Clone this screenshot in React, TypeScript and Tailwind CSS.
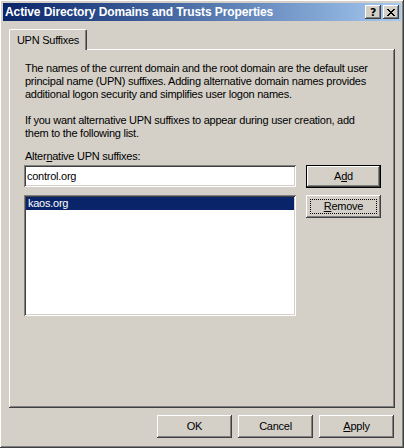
import React from 'react';

// classic 3d borders
const raised =
  'shadow-[inset_-1px_-1px_0_#404040,inset_1px_1px_0_#ffffff,inset_-2px_-2px_0_#808080,inset_2px_2px_0_#d4d0c8]';
const sunken =
  'shadow-[inset_1px_1px_0_#808080,inset_-1px_-1px_0_#ffffff,inset_2px_2px_0_#404040,inset_-2px_-2px_0_#d4d0c8]';

const CaptionButton: React.FC<{ children: React.ReactNode }> = ({ children }) => (
  <div
    className={`w-[16px] h-[14px] bg-[#d4d0c8] flex items-center justify-center text-black ${raised}`}
  >
    {children}
  </div>
);

const Button: React.FC<{
  label: React.ReactNode;
  isDefault?: boolean;
  focused?: boolean;
}> = ({ label, isDefault, focused }) => (
  <div
    className={`relative w-[75px] h-[23px] bg-[#d4d0c8] flex items-center justify-center text-black ${
      isDefault
        ? 'border border-black shadow-[inset_-1px_-1px_0_#404040,inset_1px_1px_0_#ffffff,inset_-2px_-2px_0_#808080]'
        : raised
    }`}
  >
    {focused && <div className="absolute inset-[4px] border border-dotted border-black" />}
    <span className="leading-[13px]">{label}</span>
  </div>
);

const App: React.FC = () => {
  return (
    <div
      className={`w-[404px] h-[448px] bg-[#d4d0c8] p-[3px] flex flex-col text-[11px] leading-[13px] tracking-[-0.25px] text-black font-['Liberation_Sans',Arial,sans-serif] ${raised}`}
    >
      {/* title bar */}
      <div className="h-[18px] flex items-center pl-[2px] pr-[2px] bg-gradient-to-r from-[#0a246a] to-[#a6caf0]">
        <span className="text-white font-bold text-[12px] leading-[14px] tracking-[-0.1px] flex-1 whitespace-nowrap">
          Active Directory Domains and Trusts Properties
        </span>
        <div className="flex gap-[2px]">
          <CaptionButton>
            <span className="font-bold text-[11px] leading-[11px] font-['DejaVu_Sans',sans-serif]">?</span>
          </CaptionButton>
          <CaptionButton>
            <svg width="8" height="7" viewBox="0 0 8 7" shapeRendering="crispEdges">
              <path d="M0 0h2v1h-2zM6 0h2v1h-2zM1 1h2v1h-2zM5 1h2v1h-2zM2 2h4v1h-4zM3 3h2v1h-2zM2 4h4v1h-4zM1 5h2v1h-2zM5 5h2v1h-2zM0 6h2v1h-2zM6 6h2v1h-2z" fill="#000" />
            </svg>
          </CaptionButton>
        </div>
      </div>

      <div className="flex-1 flex flex-col px-[6px] pt-[8px]">
        {/* tab strip */}
        <div className="flex h-[20px] items-end">
          <div className="relative z-10 h-[21px] -mb-[1px] w-[78px] bg-[#d4d0c8] border-l border-t border-white shadow-[inset_-1px_0_0_#808080] border-r border-r-[#404040] rounded-tl-[2px] rounded-tr-[2px] flex items-center justify-center">
            <span className="pt-[1px]">UPN Suffixes</span>
          </div>
        </div>

        {/* tab panel */}
        <div className="h-[359px] bg-[#d4d0c8] pt-[13px] pl-[15px] pr-[14px] shadow-[inset_-1px_-1px_0_#404040,inset_1px_1px_0_#ffffff,inset_-2px_-2px_0_#808080]">
          <p className="pl-[1px] whitespace-nowrap">
            The names of the current domain and the root domain are the default user
            <br />
            principal name (UPN) suffixes. Adding alternative domain names provides
            <br />
            additional logon security and simplifies user logon names.
          </p>
          <p className="pl-[1px] mt-[13px] whitespace-nowrap">
            If you want alternative UPN suffixes to appear during user creation, add
            <br />
            them to the following list.
          </p>
          <p className="pl-[1px] mt-[10px]">
            Alter<span className="underline">n</span>ative UPN suffixes:
          </p>

          <div className="mt-[2px] flex gap-[10px]">
            <div className="flex flex-col gap-[8px]">
              <div className={`w-[272px] h-[22px] bg-white flex items-center pl-[3px] ${sunken}`}>
                control.org
              </div>
              <div className={`w-[272px] h-[121px] bg-white p-[2px] ${sunken}`}>
                <div className="h-[13px] bg-[#0a246a] text-white pl-[2px] flex items-center">
                  kaos.org
                </div>
              </div>
            </div>
            <div className="flex flex-col gap-[7px]">
              <Button
                isDefault
                label={
                  <>
                    A<span className="underline">d</span>d
                  </>
                }
              />
              <Button
                focused
                label={
                  <>
                    <span className="underline">R</span>emove
                  </>
                }
              />
            </div>
          </div>
        </div>

        {/* bottom buttons */}
        <div className="flex justify-end gap-[6px] mt-[7px] pr-[1px]">
          <Button label="OK" />
          <Button label="Cancel" />
          <Button
            label={
              <>
                <span className="underline">A</span>pply
              </>
            }
          />
        </div>
      </div>
    </div>
  );
};

export default App;
